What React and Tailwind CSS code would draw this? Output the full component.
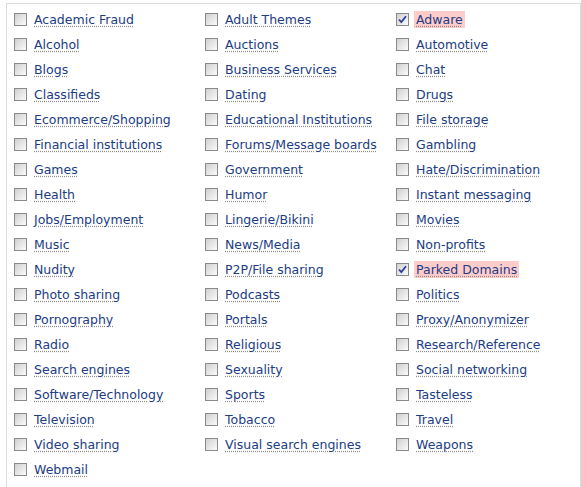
import React from "react";

const items = [
  ["Academic Fraud"], ["Adult Themes"], ["Adware", true],
  ["Alcohol"], ["Auctions"], ["Automotive"],
  ["Blogs"], ["Business Services"], ["Chat"],
  ["Classifieds"], ["Dating"], ["Drugs"],
  ["Ecommerce/Shopping"], ["Educational Institutions"], ["File storage"],
  ["Financial institutions"], ["Forums/Message boards"], ["Gambling"],
  ["Games"], ["Government"], ["Hate/Discrimination"],
  ["Health"], ["Humor"], ["Instant messaging"],
  ["Jobs/Employment"], ["Lingerie/Bikini"], ["Movies"],
  ["Music"], ["News/Media"], ["Non-profits"],
  ["Nudity"], ["P2P/File sharing"], ["Parked Domains", true],
  ["Photo sharing"], ["Podcasts"], ["Politics"],
  ["Pornography"], ["Portals"], ["Proxy/Anonymizer"],
  ["Radio"], ["Religious"], ["Research/Reference"],
  ["Search engines"], ["Sexuality"], ["Social networking"],
  ["Software/Technology"], ["Sports"], ["Tasteless"],
  ["Television"], ["Tobacco"], ["Travel"],
  ["Video sharing"], ["Visual search engines"], ["Weapons"],
  ["Webmail"],
];

function Box({ checked }) {
  return (
    <span className="w-[13px] h-[13px] shrink-0 border border-[#8a8a8a] bg-gradient-to-br from-[#d0d0d0] to-[#fbfbfb] flex items-center justify-center">
      {checked && (
        <svg width="9" height="9" viewBox="0 0 9 9">
          <path d="M1 4.5 L3.3 7 L8 1.2" fill="none" stroke="#2b3f9a" strokeWidth="1.8" />
        </svg>
      )}
    </span>
  );
}

export default function App() {
  return (
    <div className="bg-white w-[581px] h-[487px] overflow-hidden pt-[3px] pl-[6px]">
      <div className="w-[575px] h-[500px] border-l border-t border-r border-[#dcdcdc] pl-[7px] pt-[3px] grid grid-cols-[191px_191px_184px] auto-rows-[25px] content-start" style={{ fontFamily: '"DejaVu Sans", Verdana, sans-serif' }}>
        {items.map(([label, checked]) => (
          <div key={label} className="flex items-center gap-[7px]">
            <Box checked={checked} />
            <span
              className={`text-[12.5px] leading-[17px] text-[#203c82] underline decoration-dotted decoration-[#8c8c8c] underline-offset-[2px] ${checked ? "bg-[#ffcccc] px-[2px] -ml-[2px]" : ""}`}
            >
              {label}
            </span>
          </div>
        ))}
      </div>
    </div>
  );
}
